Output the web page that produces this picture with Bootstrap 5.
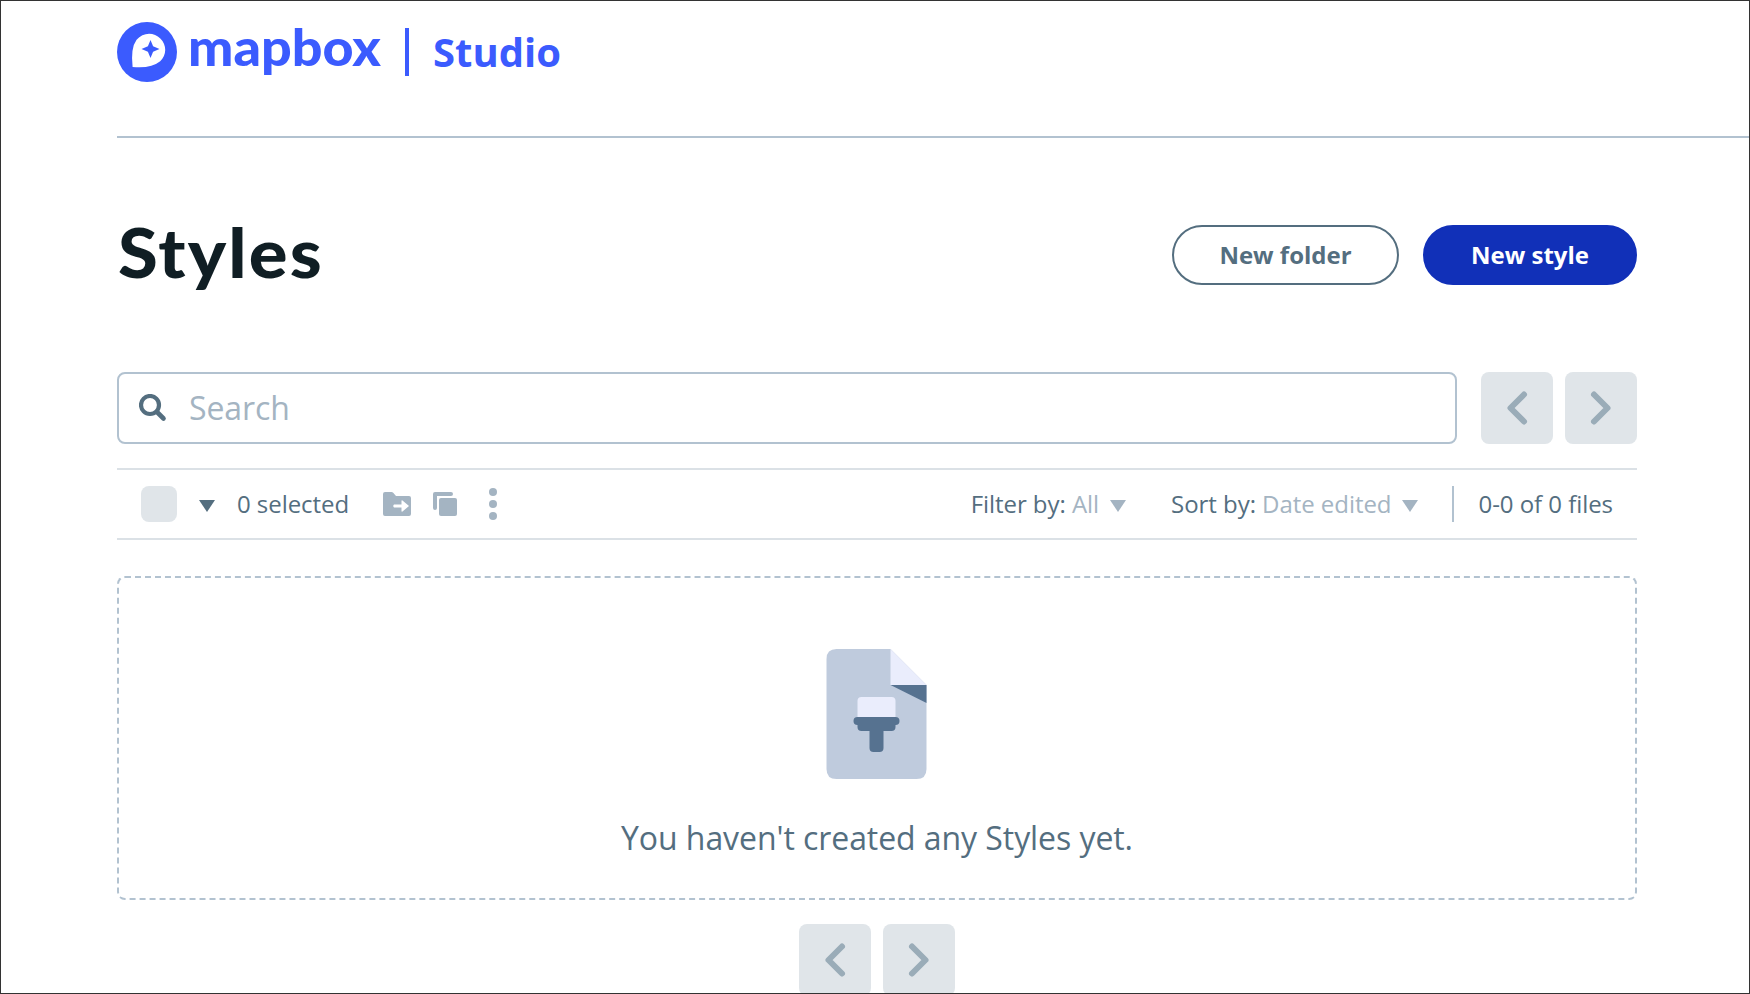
<!DOCTYPE html>
<html lang="en">
<head>
<meta charset="utf-8">
<meta name="viewport" content="width=device-width, initial-scale=1">
<title>Mapbox Studio - Styles</title>
<link href="https://cdn.jsdelivr.net/npm/bootstrap@5.3.0/dist/css/bootstrap.min.css" rel="stylesheet">
<style>
  :root { --brand:#3b5bfe; --slate:#546e7f; --mist:#a4b4c2; --edge:#b2c2d0; --fog:#e0e5e9; }
  body { font-family:"Open Sans","Noto Sans",sans-serif; font-size:24px; color:var(--slate); background:#fff; }
  svg { display:block; flex:none; }
  .frame { height:994px; border:1px solid #333; padding-left:116px; }
  .masthead { height:137px; padding-top:21px; border-bottom:2px solid var(--edge); color:var(--brand); }
  .wordmark { margin-left:12px; width:193px; }
  .bar { flex:none; width:4px; height:48px; margin:6px 24px 0 23px; background:var(--brand); }
  .product { font-size:40px; font-weight:700; line-height:60px; }
  .content { width:1520px; }
  .title-row { height:60px; margin-top:87px; }
  .page-title { font-family:Lato,sans-serif; font-weight:900; font-size:68px; line-height:60px; color:#101e24; margin:-7px 0 0 1px; letter-spacing:2px; transform:scaleX(1.063); transform-origin:left; }
  .pill { height:60px; padding:0; border-width:2px; font-size:24px; font-weight:700; line-height:56px; }
  .pill-outline { width:227px; color:var(--slate); border-color:var(--slate); }
  .pill-solid { width:214px; color:#fff; background:#1130b8; border-color:#1130b8; }
  .search-row { margin-top:87px; }
  .searchbox { height:72px; border:2px solid var(--edge); border-radius:8px; padding-left:20px; }
  .searchbox input { height:68px; font-size:32px; padding:0 0 2px; margin-left:22px; border:0; background:none; box-shadow:none!important; letter-spacing:-.1px; }
  .searchbox input::placeholder { color:var(--mist); opacity:1; }
  .pager { width:72px; height:72px; padding:0; border:0; border-radius:8px; background:var(--fog); }
  .tools { height:72px; margin-top:24px; border-top:2px solid #dbe1e6; border-bottom:2px solid #dbe1e6; padding:0 24px; line-height:36px; letter-spacing:-.05px; }
  .tick { width:36px; height:36px; border-radius:8px; background:var(--fog); margin-right:22px; }
  .pale { color:var(--mist); }
  .actions { margin-left:31.500px; overflow:visible; }
  .drop { margin:4px 0 0 11px; }
  .sorter { margin-left:45px; }
  .rule { width:2px; height:36px; margin:0 24px 0 34px; background:var(--edge); }
  .blank { height:324px; margin-top:36px; border:2px dashed var(--edge); border-radius:8px; padding-top:71px; }
  .blank p { font-size:32px; line-height:48px; margin:35px 0 0; letter-spacing:-.07px; }
</style>
</head>
<body>
<svg width="0" height="0" class="position-absolute" aria-hidden="true">
  <symbol id="left" viewBox="0 0 72 72"><path d="M43 22.5 29.5 36 43 49.5" fill="none" stroke="#9aacb8" stroke-width="6" stroke-linecap="round" stroke-linejoin="round"/></symbol>
  <symbol id="right" viewBox="0 0 72 72"><path d="M29 22.5 42.5 36 29 49.5" fill="none" stroke="#9aacb8" stroke-width="6" stroke-linecap="round" stroke-linejoin="round"/></symbol>
</svg>
<div class="frame overflow-hidden">
  <header class="masthead d-flex">
    <svg width="60" height="60" viewBox="0 0 60 60"><circle cx="30" cy="30" r="30" fill="#3b5bfe"/><path d="M15.6 44.9Q13.5 26 19.6 17.8C26 9.8 37 9.8 43.3 16.5 50 23 49.8 33 43.2 39.2Q34 46.700 15.600 44.900Z" fill="#fff"/><path d="M33.500 18 36.100 24.200 42.500 27 36.100 29.700 33.500 36 30.900 29.700 24.500 27 30.900 24.200Z" fill="#3b5bfe"/></svg>
    <svg class="wordmark" height="60" viewBox="0 0 193 60" overflow="visible"><text x="-1" y="43.500" textLength="193" lengthAdjust="spacingAndGlyphs" font-family="Lato,sans-serif" font-size="51" font-weight="900" fill="#3b5bfe">mapbox</text></svg>
    <div class="bar"></div>
    <div class="product">Studio</div>
  </header>
  <main class="content">
    <div class="title-row d-flex align-items-center">
      <h1 class="page-title me-auto">Styles</h1>
      <button class="btn rounded-pill pill pill-outline me-4">New folder</button>
      <button class="btn rounded-pill pill pill-solid">New style</button>
    </div>
    <div class="search-row d-flex">
      <div class="searchbox d-flex align-items-center flex-grow-1 me-4">
        <svg width="28" height="28" viewBox="0 0 28 28" fill="none" stroke="#546e7f"><circle cx="11" cy="11" r="9" stroke-width="4.200"/><path d="m18 18 6.500 6.500" stroke-width="4.600" stroke-linecap="round"/></svg>
        <input class="form-control" type="text" placeholder="Search">
      </div>
      <button class="btn pager" style="margin-right:12px"><svg width="72" height="72"><use href="#left"/></svg></button>
      <button class="btn pager"><svg width="72" height="72"><use href="#right"/></svg></button>
    </div>
    <div class="tools d-flex align-items-center">
      <div class="tick"></div>
      <svg width="16" height="12" style="margin:4px 22px 0 0"><path d="M0 0h16L8 12z" fill="#546e7f"/></svg>
      <span>0 selected</span>
      <svg class="actions" width="112" height="36" viewBox="0 0 112 36"><g fill="#a4b4c2"><path d="M4 6h6.500q1 0 1.700.8L15 10h13q2 0 2 2v16q0 2-2 2H4q-2 0-2-2V8q0-2 2-2z"/><path d="M54 6h16q2 0 2 2t-2 2H56v12q0 2-2 2t-2-2V8q0-2 2-2z"/><rect x="58" y="12" width="18" height="18" rx="2"/><circle cx="112" cy="6" r="4"/><circle cx="112" cy="18" r="4"/><circle cx="112" cy="30" r="4"/></g><path d="M13 18.500h7.500V15q0-1 1-.5l6.500 5.500-6.500 5.500q-1 .5-1-.5v-3.500H13q-1.500-1.500 0-3z" fill="#fff"/></svg>
      <div class="d-flex align-items-center ms-auto">
        <span>Filter by: <span class="pale">All</span></span>
        <svg class="drop" width="16" height="12"><path d="M0 0h16L8 12z" fill="#a4b4c2"/></svg>
        <span class="sorter">Sort by: <span class="pale">Date edited</span></span>
        <svg class="drop" width="16" height="12"><path d="M0 0h16L8 12z" fill="#a4b4c2"/></svg>
        <div class="rule"></div>
        <span>0-0 of 0 files</span>
      </div>
    </div>
    <section class="blank d-flex flex-column align-items-center">
      <svg width="100" height="130" viewBox="0 0 100 130" overflow="visible"><g transform="translate(-.5 0)"><path d="M10 0h54l36 36v84q0 10-10 10H10Q0 130 0 120V10Q0 0 10 0z" fill="#bfcbdd"/><path d="M64 0 100 36H64z" fill="#eaedfc"/><path d="M64 36h36v18z" fill="#567290"/><path d="M31 69V52q0-4 4-4h30q4 0 4 4v17z" fill="#eaedfc"/><path d="M31 68h38q4 0 4 4t-4 4v2q0 4-4 4h-8v17q0 4-4 4h-6q-4 0-4-4V82H35q-4 0-4-4v-2q-4 0-4-4t4-4z" fill="#567290"/></g></svg>
      <p>You haven't created any Styles yet.</p>
    </section>
    <div class="d-flex justify-content-center mt-4">
      <button class="btn pager" style="margin-right:12px"><svg width="72" height="72"><use href="#left"/></svg></button>
      <button class="btn pager"><svg width="72" height="72"><use href="#right"/></svg></button>
    </div>
  </main>
</div>
<script src="https://cdn.jsdelivr.net/npm/bootstrap@5.3.0/dist/js/bootstrap.bundle.min.js"></script>
</body>
</html>
